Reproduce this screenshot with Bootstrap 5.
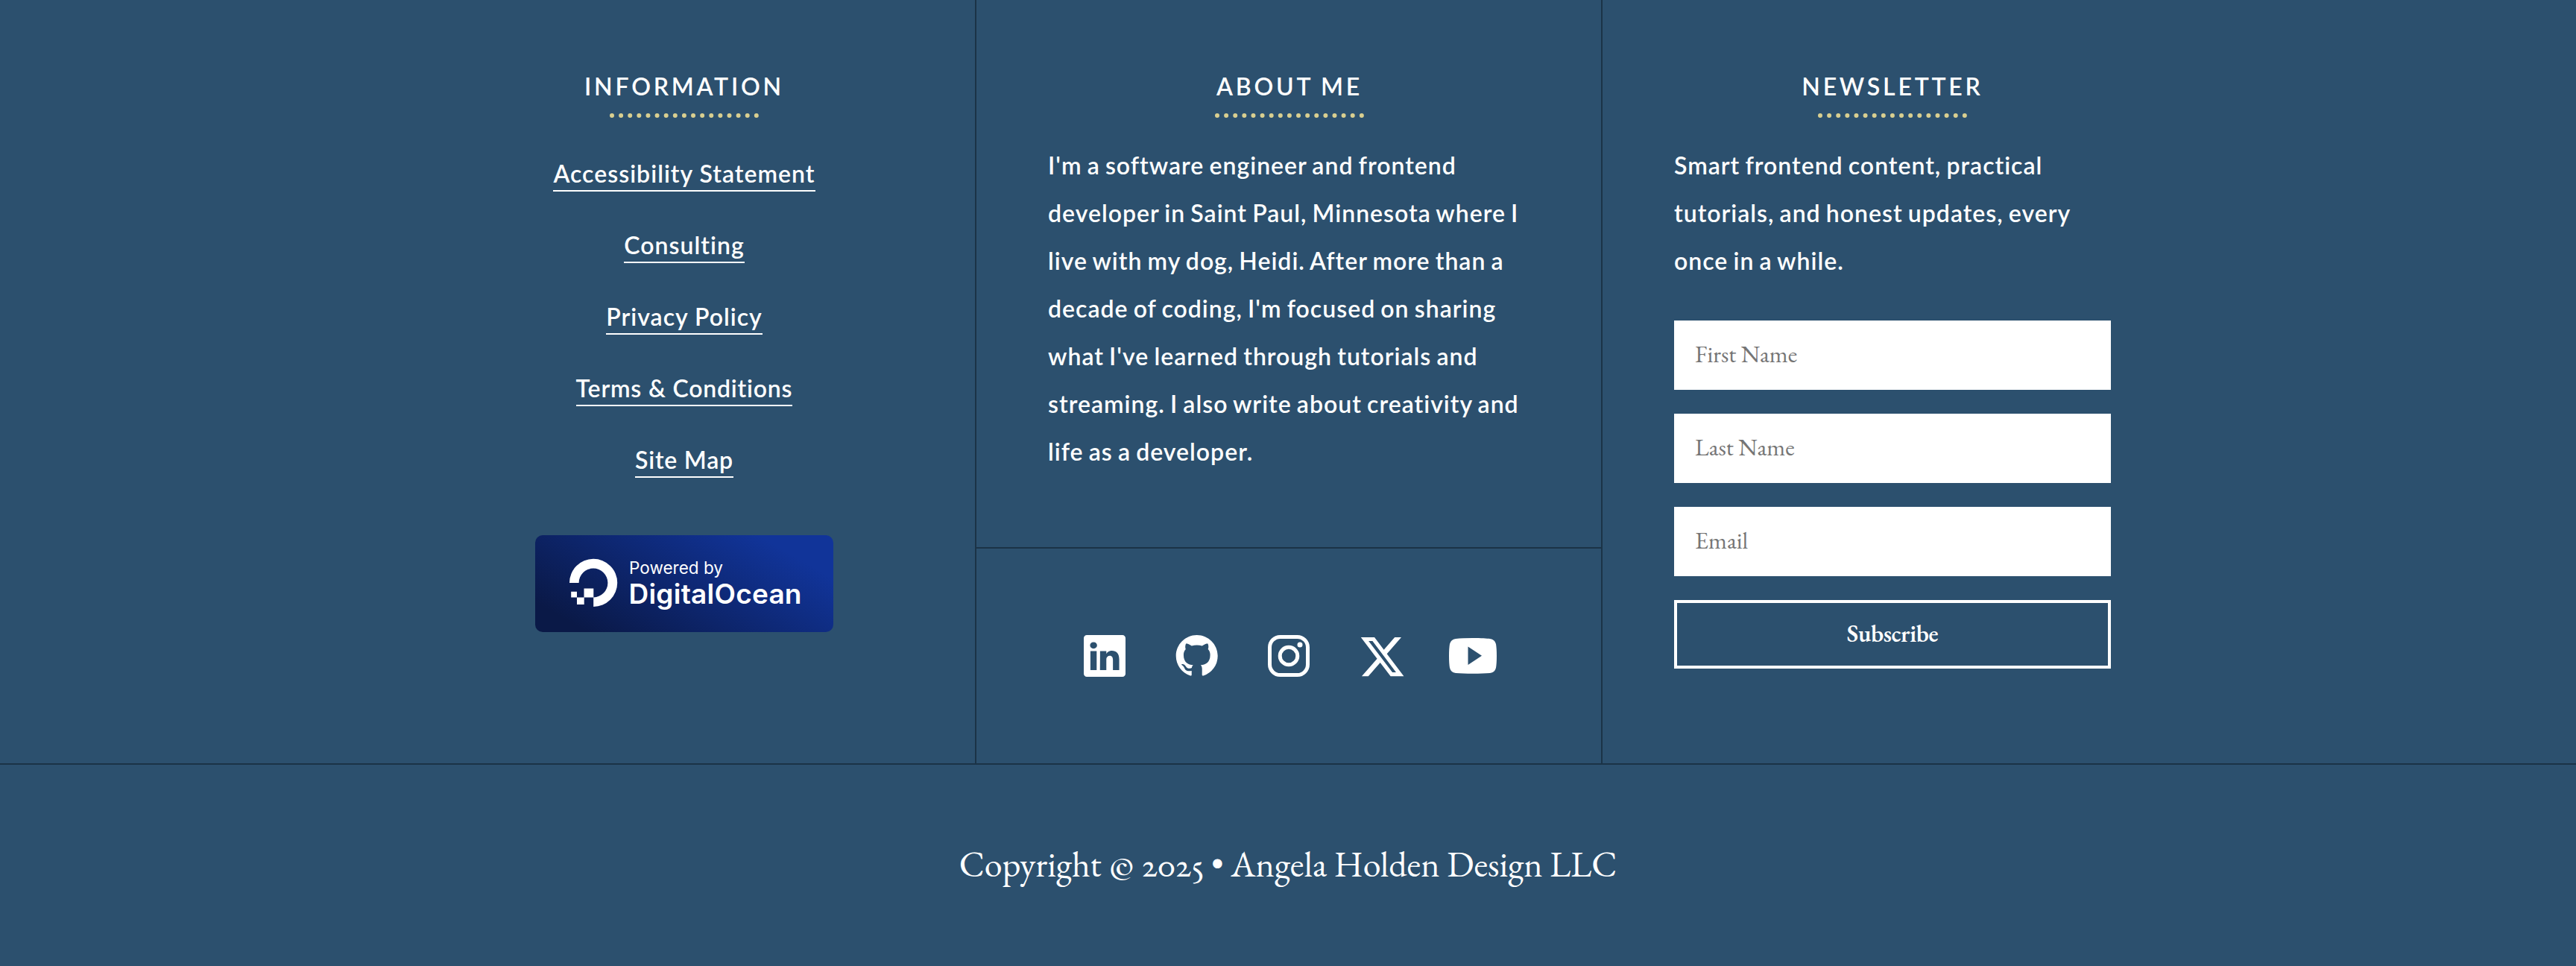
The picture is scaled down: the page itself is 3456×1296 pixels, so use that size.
<!DOCTYPE html>
<html lang="en">
<head>
<meta charset="utf-8">
<meta name="viewport" content="width=device-width, initial-scale=1">
<title>Angela Holden Design</title>
<link href="https://cdn.jsdelivr.net/npm/bootstrap@5.3.0/dist/css/bootstrap.min.css" rel="stylesheet">
<style>
  :root { --line: #1b3347; --garamond: "EB Garamond", "Cormorant Garamond", "Liberation Serif", serif; }
  body { background: #2c506e; color: #fff; font: 600 32px/64px Lato, sans-serif; letter-spacing: 1px; }
  .site-footer { min-height: 1296px; }
  .foot-top { height: 1026px; border-bottom: 2px solid var(--line); }
  .foot-grid { width: 2400px; }
  .foot-info { width: 780px; padding: 84px 96px 0; }
  .foot-mid { width: 842px; border: solid var(--line); border-width: 0 2px; }
  .foot-about { height: 736px; padding: 84px 94px 0 96px; border-bottom: 2px solid var(--line); }
  .foot-about p, .foot-news p { word-spacing: -1.8px; }
  .foot-news { width: 778px; padding: 84px 96px 0; }
  .foot-title { font: 600 32px/64px Lato, sans-serif; letter-spacing: 3.8px; word-spacing: -1px; text-transform: uppercase; text-align: center; margin: 0; }
  .foot-title::after { content: ""; display: block; width: 200px; margin: 4px auto 32px; border-bottom: 6px dotted #d9cf90; }
  .foot-links { padding-top: 21px; margin-bottom: 27px; }
  .foot-links li { height: 96px; line-height: 44px; }
  .foot-links a { display: inline-block; color: #fff; text-decoration: none; border-bottom: 2px solid #fff; letter-spacing: 1.02px; }
  .foot-links li:nth-child(n+4) a { letter-spacing: .8px; }
  .foot-field { height: 93px; border: 0; border-radius: 0; padding: 0 28px 4px; font: 400 32px var(--garamond); letter-spacing: 0; }
  .foot-field::placeholder { color: #757575; opacity: 1; }
  .foot-form { gap: 32px; margin-top: 48px; }
  .foot-btn { height: 92px; border: 4px solid #fff; border-radius: 0; color: #fff; font: 600 32px var(--garamond); letter-spacing: -.35px; padding: 0 0 3px; }
  .social { gap: 59.5px; }
  .copy { font: 400 48px/64px var(--garamond); font-variant-numeric: oldstyle-nums proportional-nums; letter-spacing: 0; padding-top: 101px; margin: 0; }
  .copy-sign { font-family: "Cormorant Garamond", serif; font-weight: 600; line-height: 1; }
</style>
</head>
<body>
<footer class="site-footer">
  <div class="foot-top">
    <div class="foot-grid d-flex mx-auto h-100">
      <section class="foot-info text-center">
        <h2 class="foot-title">Information</h2>
        <ul class="foot-links list-unstyled">
          <li><a href="#">Accessibility Statement</a></li>
          <li><a href="#">Consulting</a></li>
          <li><a href="#">Privacy Policy</a></li>
          <li><a href="#">Terms &amp; Conditions</a></li>
          <li><a href="#">Site Map</a></li>
        </ul>
        <a href="#" class="d-block" aria-label="Powered by DigitalOcean">
          <svg class="d-block mx-auto" width="400" height="130" viewBox="0 0 400 130" fill="#fff">
            <defs>
              <linearGradient id="doBg" gradientUnits="userSpaceOnUse" x1="60" y1="125" x2="177" y2="-73">
                <stop offset="0" stop-color="#0a1947"/><stop offset="1" stop-color="#113499"/>
              </linearGradient>
            </defs>
            <rect width="400" height="130" rx="10" fill="url(#doBg)"/>
            <path d="M78.2 96V83.4A19.4 19.4 0 1 0 58.6 64H46A32.1 32.1 0 1 1 78.2 96ZM65.5 71.4H78.3V83.4H65.5ZM56 83.4H65.7V93H56ZM48.2 75.8H56V83.4H48.2Z"/>
            <text x="126" y="52" font-family="Inter, sans-serif" font-size="22.5" font-weight="400" letter-spacing="0" textLength="126">Powered by</text>
            <text x="125.5" y="92" font-family="Inter, sans-serif" font-size="37" font-weight="600" letter-spacing="0" textLength="232">DigitalOcean</text>
          </svg>
        </a>
      </section>

      <div class="foot-mid d-flex flex-column">
        <section class="foot-about">
          <h2 class="foot-title">About me</h2>
          <p class="m-0">I'm a software engineer and frontend<br>developer in Saint Paul, Minnesota where I<br>live with my dog, Heidi. After more than a<br>decade of coding, I'm focused on sharing<br>what I've learned through tutorials and<br>streaming. I also write about creativity and<br>life as a developer.</p>
        </section>
        <nav class="social flex-grow-1 d-flex align-items-center justify-content-center" aria-label="Social">
          <svg width="64" height="64" viewBox="0 0 64 64" fill="#fff"><g transform="translate(4 4) scale(3.5)"><path d="M0 1.146C0 .513.526 0 1.175 0h13.65C15.474 0 16 .513 16 1.146v13.708c0 .633-.526 1.146-1.175 1.146H1.175C.526 16 0 15.487 0 14.854V1.146zm4.943 12.248V6.169H2.542v7.225h2.401zm-1.2-8.212c.837 0 1.358-.554 1.358-1.248-.015-.709-.52-1.248-1.342-1.248-.822 0-1.359.54-1.359 1.248 0 .694.521 1.248 1.327 1.248h.016zm4.908 8.212V9.359c0-.216.016-.432.08-.586.173-.431.568-.878 1.232-.878.869 0 1.216.662 1.216 1.634v3.865h2.401V9.25c0-2.22-1.184-3.252-2.764-3.252-1.274 0-1.845.7-2.165 1.193v.025h-.016l.016-.025V6.169h-2.4c.03.678 0 7.225 0 7.225h2.4z"/></g></svg>
          <svg width="64" height="64" viewBox="0 0 64 64" fill="#fff"><g transform="translate(3.700 4) scale(3.5)"><path d="M8 0C3.58 0 0 3.58 0 8c0 3.54 2.29 6.53 5.47 7.59.4.07.55-.17.55-.38 0-.19-.01-.82-.01-1.49-2.01.37-2.53-.49-2.69-.94-.09-.23-.48-.94-.82-1.13-.28-.15-.68-.52-.01-.53.63-.01 1.08.58 1.23.82.72 1.21 1.87.87 2.33.66.07-.52.28-.87.51-1.07-1.78-.2-3.64-.89-3.64-3.95 0-.87.31-1.59.82-2.15-.08-.2-.36-1.02.08-2.12 0 0 .67-.21 2.2.82.64-.18 1.32-.27 2-.27.68 0 1.36.09 2 .27 1.53-1.04 2.2-.82 2.2-.82.44 1.1.16 1.92.08 2.12.51.56.82 1.27.82 2.15 0 3.07-1.87 3.75-3.65 3.95.29.25.54.73.54 1.48 0 1.07-.01 1.93-.01 2.2 0 .21.15.46.55.38A8.012 8.012 0 0 0 16 8c0-4.42-3.58-8-8-8z"/></g></svg>
          <svg width="64" height="64" viewBox="0 0 64 64" fill="none" stroke="#fff" stroke-width="5"><rect x="6.5" y="6.5" width="51" height="51" rx="14"/><circle cx="32" cy="32" r="11.8"/><circle cx="47" cy="17" r="3.5" fill="#fff" stroke="none"/></svg>
          <svg width="64" height="64" viewBox="0 0 64 64" fill="#fff"><g transform="translate(4.8 4.4) scale(3.6)"><path d="M12.6.75h2.454l-5.36 6.142L16 15.25h-4.937l-3.867-5.07-4.425 5.07H.316l5.733-6.57L0 .75h5.063l3.495 4.633L12.601.75Zm-.86 13.028h1.36L4.323 2.145H2.865l8.875 11.633Z"/></g></svg>
          <svg width="64" height="64" viewBox="0 0 64 64" fill="#fff"><path fill-rule="evenodd" d="M32 8C43 8 51 8.500 55 9Q61.500 9.800 63 16Q64 22 64 32T63 48Q61.500 54.200 55 55Q46 55.800 32 55.800T9 55Q2.500 54.200 1 48Q0 42 0 32T1 16Q2.500 9.800 9 9Q18 8 32 8ZM25.500 19.500V44L44 31.800Z"/></svg>
        </nav>
      </div>

      <section class="foot-news">
        <h2 class="foot-title">Newsletter</h2>
        <p class="m-0">Smart frontend content, practical<br>tutorials, and honest updates, every<br>once in a while.</p>
        <form class="foot-form d-flex flex-column">
          <input class="foot-field form-control" type="text" placeholder="First Name">
          <input class="foot-field form-control" type="text" placeholder="Last Name">
          <input class="foot-field form-control" type="email" placeholder="Email">
          <button class="foot-btn btn w-100" type="button">Subscribe</button>
        </form>
      </section>
    </div>
  </div>
  <p class="copy text-center">Copyright <span class="copy-sign">©</span> 2025 • Angela Holden Design LLC</p>
</footer>
<script src="https://cdn.jsdelivr.net/npm/bootstrap@5.3.0/dist/js/bootstrap.bundle.min.js"></script>
</body>
</html>
